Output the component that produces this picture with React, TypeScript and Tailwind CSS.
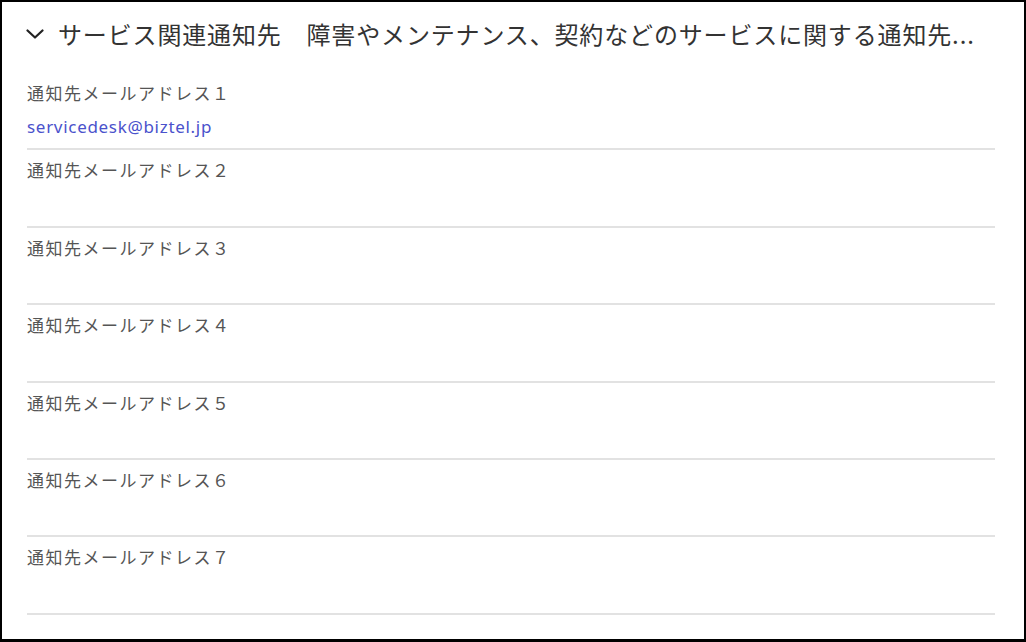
const rows = [
  { label: '通知先メールアドレス１', value: 'servicedesk@biztel.jp' },
  { label: '通知先メールアドレス２', value: '' },
  { label: '通知先メールアドレス３', value: '' },
  { label: '通知先メールアドレス４', value: '' },
  { label: '通知先メールアドレス５', value: '' },
  { label: '通知先メールアドレス６', value: '' },
  { label: '通知先メールアドレス７', value: '' },
]

export default function App() {
  return (
    <div
      className="w-[1026px] h-[642px] bg-white border-l-2 border-t-2 border-r-2 border-b-[3px] border-black overflow-hidden"
      style={{ fontFamily: '"Noto Sans", "Noto Sans CJK JP", sans-serif' }}
    >
      {/* Section header */}
      <div className="h-[64px] flex items-center pl-[24px]">
        <svg width="18" height="10" viewBox="0 0 18 10" className="shrink-0">
          <polyline
            points="1.5,1.5 9,8.5 16.5,1.5"
            fill="none"
            stroke="#222"
            strokeWidth="2.2"
            strokeLinecap="round"
            strokeLinejoin="round"
          />
        </svg>
        <h2
          className="ml-[14px] text-[24px] leading-[32px] tracking-[0.85px] text-[#333] whitespace-nowrap"
          style={{ fontFamily: '"Noto Sans CJK JP", sans-serif' }}
        >
          サービス関連通知先　障害やメンテナンス、契約などのサービスに関する通知先...
        </h2>
      </div>

      {/* Address list */}
      <div className="mt-[15px] pl-[25px] pr-[29px]">
        {rows.map((row, i) => (
          <div
            key={i}
            className={`flex flex-col gap-[10px] pb-[9.4px] border-b-2 border-[#e2e2e2] ${i === 0 ? '' : 'pt-2'}`}
          >
            <div
              className="h-[24px] leading-[24px] text-[17px] tracking-[1.5px] text-[#555]"
              style={{ fontFamily: '"Noto Sans CJK JP", sans-serif' }}
            >
              {row.label}
            </div>
            <div className="h-[24px] leading-[24px] text-[17px] tracking-[0.7px] text-[#4a52cc]">
              {row.value}
            </div>
          </div>
        ))}
      </div>
    </div>
  )
}
